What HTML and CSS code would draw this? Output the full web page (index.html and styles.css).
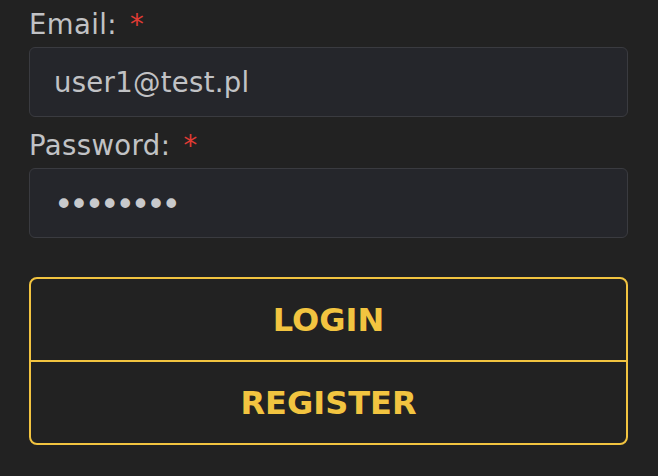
FILE: index.html
```html
<!DOCTYPE html>
<html lang="en">
<head>
<meta charset="utf-8">
<title>Login</title>
<link rel="stylesheet" href="styles.css">
</head>
<body>
<form class="form">
  <div class="field">
    <label class="label" for="email">Email: <span class="req">*</span></label>
    <input class="input" id="email" type="text" value="user1@test.pl">
  </div>
  <div class="field">
    <label class="label" for="pw">Password: <span class="req">*</span></label>
    <input class="input input-pw" id="pw" type="password" value="12345678">
  </div>
  <div class="buttons">
    <button type="button" class="btn">LOGIN</button>
    <button type="button" class="btn btn-sep">REGISTER</button>
  </div>
</form>
</body>
</html>
```
FILE: styles.css
```css
html, body {
  margin: 0;
  padding: 0;
  background: #222222;
}
body {
  font-family: "DejaVu Sans", Verdana, sans-serif;
  color: #c1c2c5;
}
.form {
  display: flex;
  flex-direction: column;
  padding: 2px 30px 0 29px;
}
.field {
  display: flex;
  flex-direction: column;
}
.field + .field {
  margin-top: 6px;
}
.label {
  font-size: 27.5px;
  line-height: 44px;
  letter-spacing: 0.4px;
  margin-bottom: 1px;
  color: #c1c2c5;
}
.req {
  color: #e03b34;
  margin-left: 4px;
}
.input {
  box-sizing: border-box;
  height: 70px;
  width: 100%;
  margin: 0;
  padding: 0 24px;
  background: #25262b;
  border: 1px solid #3a3b40;
  border-radius: 6px;
  color: #c1c2c5;
  font-family: "DejaVu Sans", Verdana, sans-serif;
  font-size: 27.5px;
  letter-spacing: 0.3px;
  outline: none;
}
.input-pw {
  font-size: 33px;
  letter-spacing: -4.1px;
  padding-left: 24px;
  padding-top: 3px;
  color: #c8c9cc;
}
.buttons {
  margin-top: 39px;
  display: flex;
  flex-direction: column;
  border: 2px solid #f2c440;
  border-radius: 8px;
  overflow: hidden;
}
.btn {
  height: 81px;
  margin: 0;
  padding: 0;
  border: 0;
  background: transparent;
  color: #f2c440;
  font-family: "DejaVu Sans", Verdana, sans-serif;
  font-weight: bold;
  font-size: 32px;
  cursor: pointer;
}
.btn-sep {
  border-top: 2px solid #f2c440;
  height: 83px;
}
```
